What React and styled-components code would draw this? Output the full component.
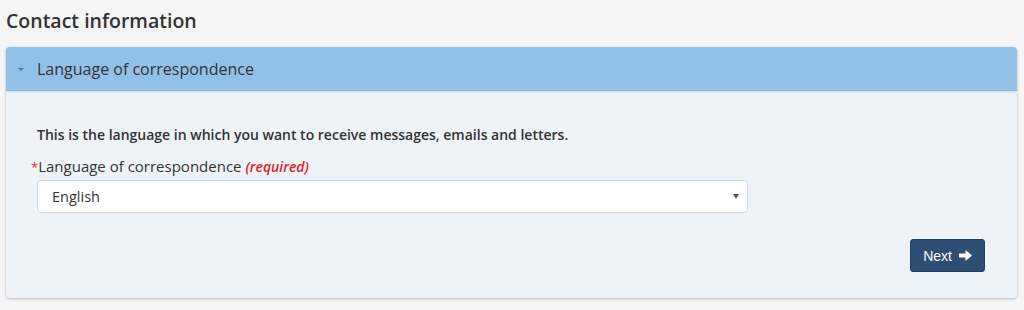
import React from "react";
import styled, { createGlobalStyle } from "styled-components";

const GlobalStyle = createGlobalStyle`
  body {
    margin: 0;
    background: #f5f5f5;
    font-family: "Open Sans", "Liberation Sans", sans-serif;
    color: #333;
  }
`;

const Page = styled.div`
  padding: 8px 7px 12px 6px;
`;

const Title = styled.h2`
  margin: 0 0 13px;
  font-size: 19.5px;
  font-weight: 600;
  line-height: 26px;
  color: #333;
`;

const Panel = styled.section`
  border-radius: 4px;
  background: #eef3f8;
  box-shadow: 0 1px 3px rgba(0, 0, 0, 0.25);
  overflow: hidden;
`;

const PanelHeader = styled.div`
  display: flex;
  align-items: center;
  height: 43px;
  padding: 0 12px;
  background: #92c1e8;
  border-bottom: 1px solid #86b4da;
  box-shadow: 0 1px 2px rgba(0, 0, 0, 0.12);
  font-size: 16px;
  color: #333;
`;

const Caret = styled.span`
  width: 0;
  height: 0;
  margin: 2px 13px 0 0;
  border-left: 3px solid transparent;
  border-right: 3px solid transparent;
  border-top: 3px solid #4d7aa6;
`;

const PanelBody = styled.div`
  padding: 34px 31px 26px 25px;
`;

const Intro = styled.p`
  margin: 0 0 11px 6px;
  font-size: 14px;
  font-weight: 600;
  line-height: 20px;
`;

const Label = styled.label`
  display: block;
  font-size: 15px;
  line-height: 20px;
  margin-bottom: 3px;
`;

const Star = styled.span`
  color: #d9232e;
  font-size: 13px;
`;

const Required = styled.em`
  color: #d9232e;
  font-style: italic;
  font-weight: 600;
  font-size: 14px;
`;

const SelectBox = styled.div`
  display: flex;
  align-items: center;
  justify-content: space-between;
  width: 711px;
  height: 33px;
  margin-left: 6px;
  padding: 0 8px 0 14px;
  box-sizing: border-box;
  background: #fff;
  border: 1px solid #d6dbe0;
  border-radius: 4px;
  font-size: 14.5px;
`;

const SelectArrow = styled.span`
  width: 0;
  height: 0;
  border-left: 3px solid transparent;
  border-right: 3px solid transparent;
  border-top: 5px solid #555;
`;

const Actions = styled.div`
  display: flex;
  justify-content: flex-end;
  margin-top: 26px;
  padding-right: 1px;
`;

const Button = styled.button`
  display: flex;
  align-items: center;
  gap: 7px;
  height: 33px;
  padding: 0 12px;
  background: #2d4e75;
  border: 1px solid #233f60;
  border-radius: 3px;
  color: #fff;
  font-family: "Liberation Sans", Arial, sans-serif;
  font-size: 14px;
`;

function ArrowIcon() {
  return (
    <svg width="13" height="11" viewBox="0 0 13 11">
      <path d="M0 3.5h6.5V0L13 5.5 6.5 11V7.5H0z" fill="#fff" />
    </svg>
  );
}

export default function App() {
  return (
    <>
      <GlobalStyle />
      <Page>
        <Title>Contact information</Title>
        <Panel>
          <PanelHeader>
            <Caret />
            Language of correspondence
          </PanelHeader>
          <PanelBody>
            <Intro>
              This is the language in which you want to receive messages, emails
              and letters.
            </Intro>
            <Label>
              <Star>*</Star>Language of correspondence{" "}
              <Required>(required)</Required>
            </Label>
            <SelectBox>
              English
              <SelectArrow />
            </SelectBox>
            <Actions>
              <Button>
                Next
                <ArrowIcon />
              </Button>
            </Actions>
          </PanelBody>
        </Panel>
      </Page>
    </>
  );
}
